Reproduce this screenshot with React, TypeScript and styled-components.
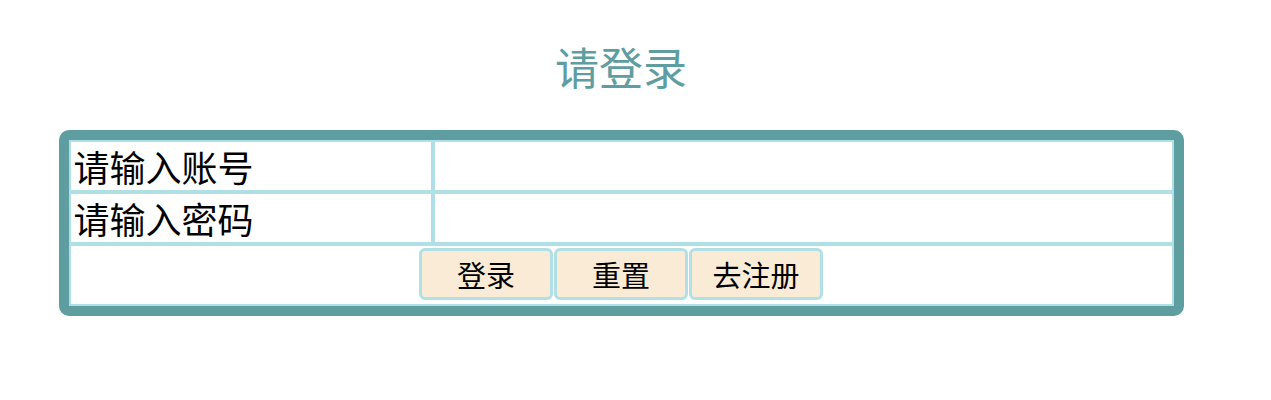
import React from "react";
import styled, { createGlobalStyle } from "styled-components";

const GlobalStyle = createGlobalStyle`
  body {
    margin: 8px;
    background: #ffffff;
    font-family: "Noto Sans CJK SC", "Noto Sans", sans-serif;
  }
`;

const Page = styled.div`
  width: 1226px;
  display: flex;
  flex-direction: column;
  align-items: center;
`;

const Title = styled.h1`
  margin: 28px 0 0 0;
  font-size: 44px;
  font-weight: normal;
  line-height: 61px;
  color: #5f9ea0;
`;

const Card = styled.div`
  margin-top: 33px;
  width: 1125px;
  box-sizing: border-box;
  border: 10px solid #5f9ea0;
  border-radius: 10px;
  display: grid;
  grid-template-columns: 364px 1fr;
  background: #ffffff;
`;

const Cell = styled.div<{ $span?: boolean; $center?: boolean }>`
  border: 2px solid #b0e0e6;
  grid-column: ${(p) => (p.$span ? "1 / -1" : "auto")};
  display: flex;
  justify-content: ${(p) => (p.$center ? "center" : "flex-start")};
  align-items: center;
  padding: ${(p) => (p.$center ? "2px 0 4px" : "0 0 0 3px")};
  min-height: 46px;
`;

const Label = styled.span`
  font-size: 36px;
  line-height: 46px;
  color: #000;
`;

const Input = styled.input`
  border: none;
  outline: none;
  width: 100%;
  height: 46px;
  background: transparent;
  font-size: 28px;
`;

const Buttons = styled.div`
  display: flex;
  gap: 1px;
`;

const Button = styled.button`
  width: 134px;
  height: 52px;
  box-sizing: border-box;
  border: 3px solid #b0e0e6;
  border-radius: 6px;
  background: #faebd7;
  font-family: "Noto Sans CJK SC", sans-serif;
  font-size: 29px;
  line-height: 1;
  color: #000;
  padding: 0;
  cursor: pointer;
`;

export default function App() {
  return (
    <>
      <GlobalStyle />
      <Page>
        <Title>请登录</Title>
        <Card>
          <Cell>
            <Label>请输入账号</Label>
          </Cell>
          <Cell>
            <Input type="text" />
          </Cell>
          <Cell>
            <Label>请输入密码</Label>
          </Cell>
          <Cell>
            <Input type="password" />
          </Cell>
          <Cell $span $center>
            <Buttons>
              <Button>登录</Button>
              <Button>重置</Button>
              <Button>去注册</Button>
            </Buttons>
          </Cell>
        </Card>
      </Page>
    </>
  );
}
